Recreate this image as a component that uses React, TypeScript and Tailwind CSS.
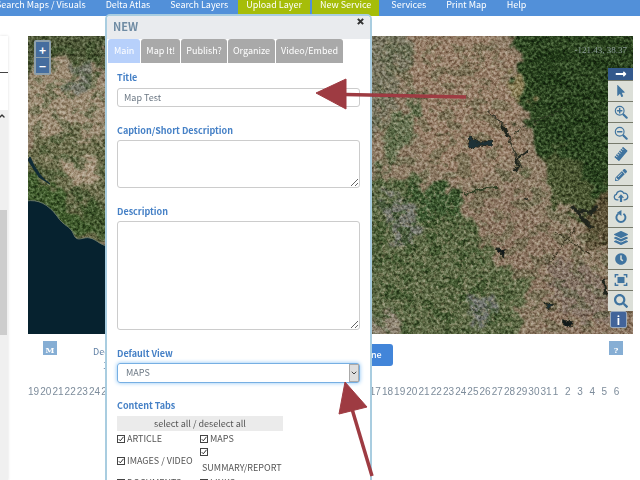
import type { ReactNode } from "react";
import { ChevronDown, ChevronUp } from "lucide-react";
import { FaClock, FaLayerGroup, FaLongArrowAltRight, FaMousePointer, FaPencilAlt, FaRulerHorizontal, FaSearch } from "react-icons/fa";

const navItems = [
  { label: "Search Maps / Visuals", active: false },
  { label: "Delta Atlas", active: false },
  { label: "Search Layers", active: false },
  { label: "Upload Layer", active: true },
  { label: "New Service", active: true },
  { label: "Services", active: false },
  { label: "Print Map", active: false },
  { label: "Help", active: false },
];

const tabs = ["Main", "Map It!", "Publish?", "Organize", "Video/Embed"];

// Nov 19-30, the whole of December, Jan 1-6
const days = [
  ...Array.from({ length: 12 }, (_, i) => i + 19),
  ...Array.from({ length: 31 }, (_, i) => i + 1),
  ...Array.from({ length: 6 }, (_, i) => i + 1),
];

function NavBar() {
  return (
    <nav className="flex h-4 bg-[#5290d9] text-[9px] leading-2.5 text-white">
      {navItems.map((item) => (
        <a
          key={item.label}
          href="#"
          className={
            item.active
              ? "mr-0.5 shrink-0 bg-[#a6bd09] px-2 whitespace-nowrap"
              : "shrink-0 px-2.5 whitespace-nowrap first:-ml-1 first:pl-0"
          }
        >
          {item.label}
        </a>
      ))}
    </nav>
  );
}

function Sidebar() {
  return (
    <aside className="mr-5 flex w-2 shrink-0 flex-col shadow-[0_0_3px_#ddd]">
      <div className="h-[37px] border-b border-[#444]" />
      <div className="h-[37px]" />
      <div className="flex-1 bg-[#f0f0f0]">
        <ChevronUp className="mt-0.5 -ml-0.5 size-2 text-[#333]" strokeWidth={4} />
        <div className="mt-[90px] h-[125px] w-[7px] bg-[#cdcdcd]" />
      </div>
    </aside>
  );
}

function SatelliteMap() {
  return (
    <svg
      className="absolute inset-0 size-full"
      viewBox="28 36 605 298"
      preserveAspectRatio="xMidYMid slice"
      aria-hidden="true"
    >
      <defs>
        <filter id="rough" x="-30%" y="-30%" width="160%" height="160%" colorInterpolationFilters="sRGB">
          <feTurbulence type="fractalNoise" baseFrequency="0.06" numOctaves="5" seed="4" result="n" />
          <feDisplacementMap in="SourceGraphic" in2="n" scale="44" xChannelSelector="R" yChannelSelector="G" />
          <feGaussianBlur stdDeviation="1.2" />
        </filter>
        <filter id="edge" x="-10%" y="-10%" width="120%" height="120%" colorInterpolationFilters="sRGB">
          <feTurbulence type="fractalNoise" baseFrequency="0.2" numOctaves="3" seed="9" result="n" />
          <feDisplacementMap in="SourceGraphic" in2="n" scale="6" xChannelSelector="R" yChannelSelector="G" />
        </filter>
        <filter id="greenSpots" x="-10%" y="-10%" width="120%" height="120%" colorInterpolationFilters="sRGB">
          <feGaussianBlur in="SourceGraphic" stdDeviation="8" result="soft" />
          <feTurbulence type="fractalNoise" baseFrequency="0.07 0.09" numOctaves="6" seed="21" />
          <feColorMatrix values="0 0 0 0 0.2  0 0 0 0 0.3  0 0 0 0 0.14  0 7 0 0 -3.4" />
          <feComposite in2="soft" operator="in" />
        </filter>
        <filter id="tanSpots" x="-10%" y="-10%" width="120%" height="120%" colorInterpolationFilters="sRGB">
          <feGaussianBlur in="SourceGraphic" stdDeviation="6" result="soft" />
          <feTurbulence type="fractalNoise" baseFrequency="0.22" numOctaves="4" seed="33" />
          <feColorMatrix values="0 0 0 0 0.66  0 0 0 0 0.62  0 0 0 0 0.5  7 0 0 0 -3.8" />
          <feComposite in2="soft" operator="in" />
        </filter>
        <filter id="grain" x="0" y="0" width="100%" height="100%" colorInterpolationFilters="sRGB">
          <feTurbulence type="fractalNoise" baseFrequency="0.35" numOctaves="4" seed="7" />
          <feColorMatrix values="1.8 0 0 0 -0.38  1.8 0 0 0 -0.38  1.8 0 0 0 -0.38  0 0 0 0 1" />
        </filter>
        <filter id="ridges" x="-10%" y="-10%" width="120%" height="120%" colorInterpolationFilters="sRGB">
          <feGaussianBlur in="SourceGraphic" stdDeviation="5" result="soft" />
          <feTurbulence type="fractalNoise" baseFrequency="0.03 0.1" numOctaves="5" seed="12" />
          <feColorMatrix values="0 0 0 0 0.08  0 0 0 0 0.17  0 0 0 0 0.06  0 6 0 0 -2.8" />
          <feComposite in2="soft" operator="in" />
        </filter>
      </defs>

      <rect x="28" y="36" width="605" height="298" fill="#8c7963" />

      <g filter="url(#rough)">
        {/* western hills */}
        <path d="M0 10H110V70L80 60L52 70L34 100H0Z" fill="#4c5635" />
        <path d="M20 82L44 56L74 52L110 80V140L96 158L60 152L10 134Z" fill="#9b8a72" />
        <path d="M70 66L84 60L92 80L78 88L66 80Z" fill="#747668" />
        <path d="M34 138L70 134L120 142V260L80 240L10 210Z" fill="#686a48" />
        <path d="M52 158L84 160L100 178L76 184Z" fill="#a4927a" />
        <path d="M20 168L48 182L76 210L92 240L60 232L10 212Z" fill="#3f5b2b" />
        <path d="M76 198L120 212V254L88 232Z" fill="#41572c" />
        {/* valley floor */}
        <path d="M360 20H412L400 90L384 120L360 130Z" fill="#77745f" />
        <path d="M386 120L404 100L420 98L438 70L450 70L430 112L406 142L384 178Z" fill="#65704f" />
        <path d="M350 176L410 178L455 196L462 218L486 245L500 272L530 282L520 350H350Z" fill="#596641" />
        <path d="M415 182L456 184L462 212L440 222L415 212Z" fill="#3a562e" />
        <path d="M382 196L402 194L422 228L416 246L397 240Z" fill="#707369" />
        <path d="M460 298L487 300L492 316L474 322Z" fill="#6e726c" />
        <path d="M350 312L396 314L408 350H350Z" fill="#8c8270" />
        {/* foothills */}
        <path d="M410 30L490 30L516 100L520 150L460 180L420 150Z" fill="#947b65" />
        <path d="M464 198L510 186L560 240L600 290L640 320V350H560L528 280L500 264L470 226Z" fill="#8b7460" />
        <path d="M545 262L590 262L620 304L590 324L552 300Z" fill="#827062" />
        {/* sierra forest */}
        <path d="M508 0H680V240L612 206L578 166L544 156L530 124L514 96L522 84Z" fill="#2b441f" />
        <path d="M514 70L526 84L534 108L520 104L510 84Z" fill="#8b7f56" />
        <path d="M534 152L575 158L612 208L594 226L556 206Z" fill="#48542f" />
        <path d="M596 196L680 196V290L612 262L588 228Z" fill="#5b5036" />
      </g>

      <path d="M372 36H500L516 130L590 225L633 260V334H372Z" fill="#fff" filter="url(#greenSpots)" opacity="0.3" />
      <path d="M372 180L450 195L490 270L510 334H372Z" fill="#fff" filter="url(#greenSpots)" opacity="0.6" />
      <path d="M28 36H110V250L28 200Z" fill="#fff" filter="url(#greenSpots)" opacity="0.45" />
      <path d="M28 76H110V210L28 165ZM372 36H505L520 140L590 230L633 334H372Z" fill="#fff" filter="url(#tanSpots)" opacity="0.4" />
      <path d="M530 36H633V215L608 200L578 160L540 125Z" fill="#fff" filter="url(#ridges)" opacity="0.5" />

      <rect x="28" y="36" width="605" height="298" filter="url(#grain)" className="mix-blend-soft-light" opacity="0.75" />

      {/* ocean and coast */}
      <path
        d="M26 201C38 199 48 204 57 216C64 227 70 225 74 235C77 243 84 236 90 238C98 240 100 246 112 247V336H26Z"
        fill="#06222f"
        stroke="#687765"
      />
      <path d="M30 157Q38 176 50 184L39 177L28 160Z" fill="#102b36" stroke="#102b36" />

      {/* lakes and rivers */}
      <g filter="url(#edge)" fill="#12191a" stroke="#20251d" strokeLinecap="round" strokeLinejoin="round">
        <path d="M467 143L470 137L478 142L492 141L491 146L480 145L474 149L469 147Z" fill="#1f3237" />
        <path d="M488 110L500 122L508 134L514 152L522 168" fill="none" stroke="#3a3a2c" strokeWidth="1.5" />
        <path d="M503 126L508 136" fill="none" strokeWidth="3" />
        <path d="M512 134L530 122L550 116L568 103" fill="none" stroke="#2c3322" />
        <path d="M516 158L518 166L515 170M518 158L526 152" fill="none" strokeWidth="2.5" />
        <path d="M573 207L580 212L588 211M577 212L585 222L590 227M596 208L590 213" fill="none" strokeWidth="3.5" />
        <path d="M550 262L566 240L576 227M556 232L567 240L590 254" fill="none" stroke="#34301f" />
        <path d="M497 249L506 250L503 256L500 253Z" />
        <path d="M464 194L486 188L498 187" fill="none" stroke="#2f3d22" strokeWidth="2" />
        <path d="M524 198L527 199" fill="none" strokeWidth="2" />
        <path d="M545 302L554 305L548 310Z" fill="#1f3237" />
        <path d="M562 320L573 322L571 327L564 325Z" />
        <path d="M604 280L606 294" fill="none" strokeWidth="3" />
      </g>
    </svg>
  );
}

function ZoomGlass({ plus }: { plus?: boolean }) {
  return (
    <svg viewBox="0 0 16 16" className="size-3.5" fill="none" stroke="currentColor" strokeLinecap="round">
      <circle cx="6.5" cy="6.5" r="5" strokeWidth="1.3" />
      <path d={plus ? "M4 6.5H9M6.5 4V9" : "M4 6.5H9"} strokeWidth="1.6" />
      <path d="M10.8 10.8L14.5 14.5" strokeWidth="2.4" />
    </svg>
  );
}

function CloudUp() {
  return (
    <svg viewBox="0 0 18 14" className="h-3 w-4" fill="none" stroke="currentColor" strokeWidth="1.5">
      <path d="M6 11.5H4.5A3.2 3.2 0 0 1 3.6 5.2A4.6 4.6 0 0 1 12.3 3.8A3.8 3.8 0 0 1 13.6 11.5H12" />
      <path d="M9 14V8" strokeWidth="2.6" />
      <path d="M9 5L12.6 9H5.4Z" fill="currentColor" stroke="none" />
    </svg>
  );
}

function Refresh() {
  return (
    <svg viewBox="0 0 16 16" className="size-3.5" fill="none" stroke="currentColor" strokeWidth="2.2">
      <path d="M10.8 4.2A5.2 5.2 0 1 1 5 4.2" />
      <path d="M8.5 0V6.8L3.4 3.2Z" fill="currentColor" stroke="none" />
    </svg>
  );
}

function FullExtent() {
  return (
    <svg viewBox="0 0 16 16" className="size-3.5" fill="none" stroke="currentColor" strokeWidth="1.6">
      <path d="M1.5 5V2H5M11 2H14.5V5M14.5 11V14H11M5 14H1.5V11" />
      <rect x="4" y="4.5" width="8" height="7" fill="currentColor" stroke="none" />
    </svg>
  );
}

const tools: { name: string; icon: ReactNode }[] = [
  { name: "Select", icon: <FaMousePointer className="size-3" /> },
  { name: "Zoom in", icon: <ZoomGlass plus /> },
  { name: "Zoom out", icon: <ZoomGlass /> },
  { name: "Measure", icon: <FaRulerHorizontal className="size-3.5 -rotate-50" /> },
  { name: "Draw", icon: <FaPencilAlt className="size-3" /> },
  { name: "Upload", icon: <CloudUp /> },
  { name: "Reset", icon: <Refresh /> },
  { name: "Layers", icon: <FaLayerGroup className="size-3.5" /> },
  { name: "Time", icon: <FaClock className="size-3" /> },
  { name: "Full extent", icon: <FullExtent /> },
  { name: "Search", icon: <FaSearch className="size-3.5" /> },
];

function Toolbar() {
  return (
    <div className="absolute top-8 right-0 flex w-[25px] flex-col">
      <button aria-label="Collapse" className="flex h-3 items-center justify-center bg-[#34598c] text-white">
        <FaLongArrowAltRight className="size-3" />
      </button>
      {tools.map((tool) => (
        <button
          key={tool.name}
          aria-label={tool.name}
          className="flex h-[21px] items-center justify-center border-t border-[#777a6c] bg-[#dcdfd8] text-[#40749f]"
        >
          {tool.icon}
        </button>
      ))}
      <button
        aria-label="Info"
        className="ml-0.5 size-[17px] rounded-xs border border-[#9aa9bb] bg-[#42649a] text-[11px] leading-3 font-bold text-white"
      >
        i
      </button>
    </div>
  );
}

function MapPanel() {
  return (
    <main className="min-w-0 flex-1">
      <div className="relative mr-[7px] h-[298px] overflow-hidden">
        <SatelliteMap />
        <div className="absolute top-1 left-1.5 flex w-[17px] flex-col gap-px rounded-xs bg-[#8ea0ab] p-0.5 text-[12px] leading-3 font-bold text-white">
          <button className="h-[15px] bg-[#456d9e]">+</button>
          <button className="h-[15px] bg-[#456d9e]">−</button>
        </div>
        <div className="absolute top-1.5 right-1.5 font-['Liberation_Serif',serif] text-[9px] leading-4 text-[#8b9a96]">
          -121.43, 38.37
        </div>
        <Toolbar />
      </div>

      <div className="mt-[7px] mr-[17px] flex pl-[15px] text-[9px]">
        <button className="size-3.5 shrink-0 bg-[#86aed4] pt-1 font-['DejaVu_Serif',serif] text-[8px] leading-2 font-bold text-white">
          M
        </button>
        <div className="ml-9 w-60 shrink-0 leading-3.5 text-[#6080a5]">
          <div className="pt-1">Dec</div>
          <div className="pl-2.5">1</div>
        </div>
        <div className="flex-1">
          <button className="mt-[3px] h-[22px] rounded-[3px] bg-[#4285d9] px-[11px] font-medium text-white">Timeline</button>
        </div>
        <button className="size-3.5 shrink-0 bg-[#86aed4] pt-1 font-['DejaVu_Serif',serif] text-[8px] leading-2 font-bold text-white">
          ?
        </button>
      </div>

      <div className="mt-[11px] mr-3.5 grid grid-cols-[repeat(49,minmax(0,1fr))] font-['Liberation_Sans',sans-serif] text-[10px] leading-4 text-[#7d8c9b]">
        {days.map((day, i) => (
          <span key={i}>{day}</span>
        ))}
      </div>
    </main>
  );
}

function CheckItem({ label, wrap }: { label: string; wrap?: boolean }) {
  return (
    <label className={wrap ? "flex flex-col gap-1.5" : "flex items-center gap-0.5"}>
      <span className="relative size-2 shrink-0">
        <input type="checkbox" defaultChecked className="block size-2 appearance-none border border-[#444] bg-white" />
        <svg viewBox="0 0 8 8" className="pointer-events-none absolute inset-0 size-2" fill="none" stroke="#333">
          <path d="M1.8 4.2L3.3 5.8L6.5 1.8" />
        </svg>
      </span>
      <span className={wrap ? "pl-0.5 whitespace-nowrap" : "whitespace-nowrap"}>{label}</span>
    </label>
  );
}

function NewMapDialog() {
  return (
    <div
      role="dialog"
      aria-labelledby="dialog-title"
      className="absolute top-3.5 left-[105px] h-full w-[267px] rounded-[5px] border-2 border-[#a9cde0] bg-white"
    >
      <div className="flex h-[23px] items-center justify-between rounded-t-[3px] bg-[#e9ebee] px-1.5 pb-1">
        <h2 id="dialog-title" className="text-[11px] leading-4 font-bold text-[#6f8ba3]">
          NEW
        </h2>
        <button aria-label="Close" className="-mt-2 text-[#333]">
          <svg viewBox="0 0 8 8" className="size-[7px]" stroke="currentColor" strokeWidth="2.4">
            <path d="M1 1L7 7M7 1L1 7" />
          </svg>
        </button>
      </div>

      <div role="tablist" className="flex gap-px pl-px text-[9px] text-white">
        {tabs.map((tab, i) => (
          <button
            key={tab}
            role="tab"
            aria-selected={i === 0}
            className={
              i === 0
                ? "h-6 rounded-t-[3px] bg-[#b7d0fb] px-1.5 whitespace-nowrap"
                : "h-6 rounded-t-[3px] bg-[#a9a9a9] px-[5px] whitespace-nowrap"
            }
          >
            {tab}
          </button>
        ))}
      </div>

      <form className="px-2.5 pt-2 text-[9px] text-[#6c7884]">
        <label htmlFor="title" className="block h-[17px] leading-3.5 font-bold text-[#4580c6]">
          Title
        </label>
        <input
          id="title"
          defaultValue="Map Test"
          className="block h-[19px] w-full rounded-[3px] border border-[#ccc] px-1.5"
        />
        <label htmlFor="caption" className="mt-[17px] block h-4 leading-3.5 font-bold text-[#4580c6]">
          Caption/Short Description
        </label>
        <textarea id="caption" className="block h-12 w-full rounded-[3px] border border-[#ccc]" />
        <label htmlFor="description" className="mt-[17px] block h-4 leading-3.5 font-bold text-[#4580c6]">
          Description
        </label>
        <textarea id="description" className="block h-[109px] w-full rounded-[3px] border border-[#ccc]" />
        <label htmlFor="view" className="mt-[17px] block h-4 leading-3.5 font-bold text-[#4580c6]">
          Default View
        </label>
        <div className="relative">
          <select
            id="view"
            className="block h-5 w-full appearance-none rounded-[3px] border border-[#76afe3] pl-2 shadow-[0_0_4px_#8cc4f5]"
          >
            <option>MAPS</option>
            <option>ARTICLE</option>
          </select>
          <span className="pointer-events-none absolute inset-y-px right-px flex w-2.5 items-center justify-center border border-[#aaa] bg-[#dedede] text-[#444]">
            <ChevronDown className="size-2" strokeWidth={3} />
          </span>
        </div>

        <fieldset className="pt-4">
          <legend className="float-left h-[17px] w-full leading-3.5 font-bold text-[#4580c6]">Content Tabs</legend>
          <button type="button" className="clear-both block h-[15px] w-[166px] bg-[#ebebeb] leading-3.5 text-[#555]">
            select all / deselect all
          </button>
          <div className="mt-0.5 grid w-[166px] grid-cols-2 items-center gap-y-[3px] leading-3 text-[#555]">
            <CheckItem label="ARTICLE" />
            <CheckItem label="MAPS" />
            <CheckItem label="IMAGES / VIDEO" />
            <CheckItem label="SUMMARY/REPORT" wrap />
            <CheckItem label="DOCUMENTS" />
            <CheckItem label="LINKS" />
          </div>
        </fieldset>
      </form>
    </div>
  );
}

function Arrows() {
  return (
    <svg
      className="pointer-events-none absolute top-0 left-0 h-[480px] w-[640px]"
      viewBox="0 0 640 480"
      fill="#9e3b42"
      stroke="#9e3b42"
      aria-hidden="true"
    >
      <path d="M345 94.5L466 97" strokeWidth="3.5" />
      <path d="M316 93L346 79V109Z" />
      <path d="M352 409L372 476" strokeWidth="3.5" />
      <path d="M345 382L367 407L339 414Z" />
    </svg>
  );
}

export default function App() {
  return (
    <div className="relative flex h-screen flex-col overflow-hidden bg-white font-['Noto_Sans_CJK_SC',sans-serif]">
      <NavBar />
      <div className="flex flex-1 pt-5">
        <Sidebar />
        <MapPanel />
      </div>
      <NewMapDialog />
      <Arrows />
    </div>
  );
}
